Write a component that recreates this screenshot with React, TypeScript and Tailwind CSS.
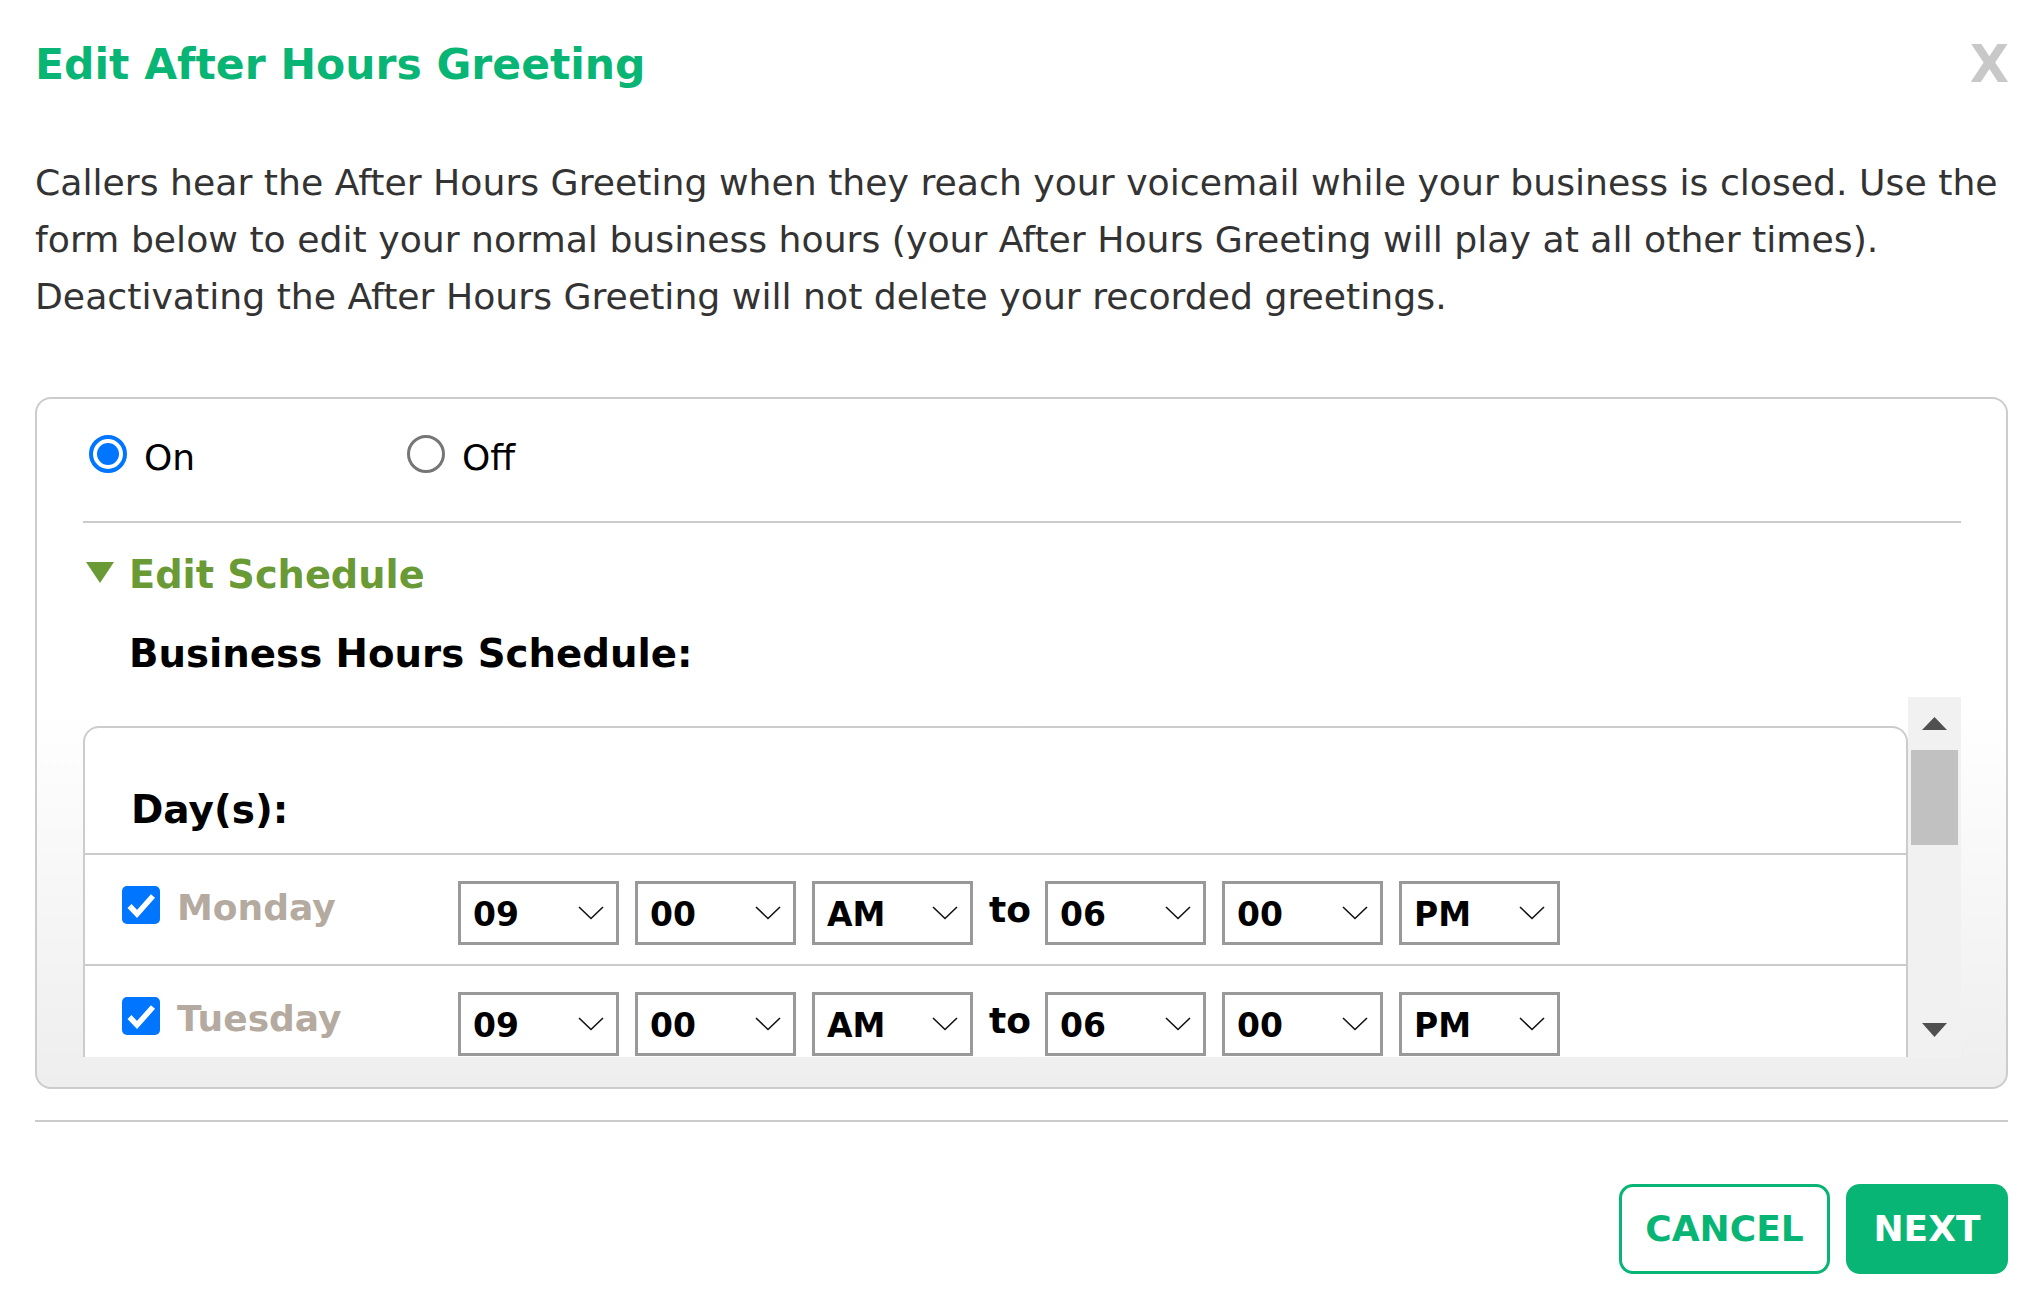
import { FC } from "react";

const GREEN = "text-[#08b574]";

const Chevron: FC = () => (
  <svg width="26" height="14" viewBox="0 0 26 14" fill="none">
    <polyline points="1,1 13,12.5 25,1" stroke="#111" strokeWidth="1.6" />
  </svg>
);

const Select: FC<{ value: string }> = ({ value }) => (
  <div className="w-[161px] h-[64px] border-[3px] border-[#999] bg-white flex items-center justify-between pl-[12px] pr-[12px] shrink-0">
    <span className="text-[33px] leading-[38px] font-bold text-black pt-[3px]">{value}</span>
    <Chevron />
  </div>
);

const Checkbox: FC = () => (
  <div className="w-[38px] h-[38px] rounded-[5px] bg-[#0075ff] flex items-center justify-center shrink-0">
    <svg width="38" height="38" viewBox="0 0 38 38" fill="none">
      <polyline points="7.5,20 15,28 31,10" stroke="white" strokeWidth="5.5" />
    </svg>
  </div>
);

const DayRow: FC<{ day: string }> = ({ day }) => (
  <div className="flex items-start pt-[26px] pb-[19px] pl-[37px] border-b-2 border-[#ccc]">
    <div className="mt-[5px]">
      <Checkbox />
    </div>
    <div className="w-[281px] ml-[17px] mt-[6px] text-[36px] leading-[42px] font-bold text-[#b4aaa0]">{day}</div>
    <div className="flex items-start gap-[16px]">
      <Select value="09" />
      <Select value="00" />
      <Select value="AM" />
      <span className="mt-[8px] -mr-[2px] text-[36px] leading-[42px] font-bold text-black">to</span>
      <Select value="06" />
      <Select value="00" />
      <Select value="PM" />
    </div>
  </div>
);

const Radio: FC<{ checked?: boolean }> = ({ checked }) =>
  checked ? (
    <div className="w-[38px] h-[38px] rounded-full border-[4px] border-[#0075ff] bg-white p-[4px] shrink-0">
      <div className="w-full h-full rounded-full bg-[#0075ff]" />
    </div>
  ) : (
    <div className="w-[38px] h-[38px] rounded-full border-[3px] border-[#767676] bg-white shrink-0" />
  );

const ScrollBar: FC = () => (
  <div className="w-[53px] h-full bg-[#f1f1f1] flex flex-col items-center pt-[20px] pb-[20px]">
    <svg width="25" height="13" viewBox="0 0 25 13">
      <polygon points="12.5,0 25,13 0,13" fill="#505050" />
    </svg>
    <div className="mt-[20px] w-[47px] h-[95px] bg-[#c1c1c1]" />
    <div className="flex-1" />
    <svg width="25" height="14" viewBox="0 0 25 14">
      <polygon points="0,0 25,0 12.5,14" fill="#505050" />
    </svg>
  </div>
);

export default function App() {
  return (
    <div className="w-[2040px] h-[1310px] bg-white font-['DejaVu_Sans',sans-serif] pl-[35px] pr-[32px]">
      <header className="flex items-start justify-between pt-[40px]">
        <h1 className={`text-[42.5px] leading-[50px] font-bold ${GREEN}`}>Edit After Hours Greeting</h1>
        <span className="text-[51px] leading-[50px] font-bold text-[#c8c8c8] -mr-[1px]">X</span>
      </header>

      <p className="mt-[64px] text-[36.2px] leading-[57px] text-[#333]">
        Callers hear the After Hours Greeting when they reach your voicemail while your business is closed. Use the
        form below to edit your normal business hours (your After Hours Greeting will play at all other times).
        Deactivating the After Hours Greeting will not delete your recorded greetings.
      </p>

      <section className="mt-[72px] h-[692px] rounded-[16px] border-2 border-[#ccc] bg-linear-to-b from-white from-45% to-[#eeeeee] pt-[36px] pl-[46px] pr-[45px]">
        <div className="flex items-start h-[38px]">
          <label className="w-[318px] flex items-start">
            <span className="ml-[6px]">
              <Radio checked />
            </span>
            <span className="ml-[17px] mt-[2px] text-[36px] leading-[42px] text-black">On</span>
          </label>
          <label className="flex items-start">
            <span className="ml-[6px]">
              <Radio />
            </span>
            <span className="ml-[17px] mt-[2px] text-[36px] leading-[42px] text-black">Off</span>
          </label>
        </div>

        <div className="mt-[48px] h-[2px] bg-[#ccc]" />

        <div className="mt-[30px] flex items-start">
          <svg className="ml-[3px] mt-[9px]" width="28" height="21" viewBox="0 0 28 21">
            <polygon points="0,0 28,0 14,21" fill="#6a9a36" />
          </svg>
          <span className="ml-[15px] text-[38.3px] leading-[44px] font-bold text-[#6a9a36]">Edit Schedule</span>
        </div>

        <h2 className="mt-[35px] ml-[46px] text-[38.7px] leading-[44px] font-bold text-black">Business Hours Schedule:</h2>

        <div className="mt-[21px] h-[360px] flex">
          <div className="flex-1 overflow-hidden">
            <div className="mt-[29px] rounded-t-[16px] border-2 border-b-0 border-[#ccc] bg-white">
              <div className="pt-[60px] pb-[21px] pl-[46px] border-b-2 border-[#ccc]">
                <h3 className="text-[39px] leading-[44px] font-bold text-black">Day(s):</h3>
              </div>
              <DayRow day="Monday" />
              <DayRow day="Tuesday" />
            </div>
          </div>
          <ScrollBar />
        </div>
      </section>

      <div className="mt-[31px] h-[2px] bg-[#ccc]" />

      <div className="mt-[62px] flex justify-end gap-[16px]">
        <button className={`w-[211px] h-[90px] rounded-[14px] border-[3px] border-[#08b574] bg-white text-[36px] font-bold ${GREEN}`}>
          CANCEL
        </button>
        <button className="w-[162px] h-[90px] rounded-[14px] bg-[#08b574] text-[36px] font-bold text-white">NEXT</button>
      </div>
    </div>
  );
}
